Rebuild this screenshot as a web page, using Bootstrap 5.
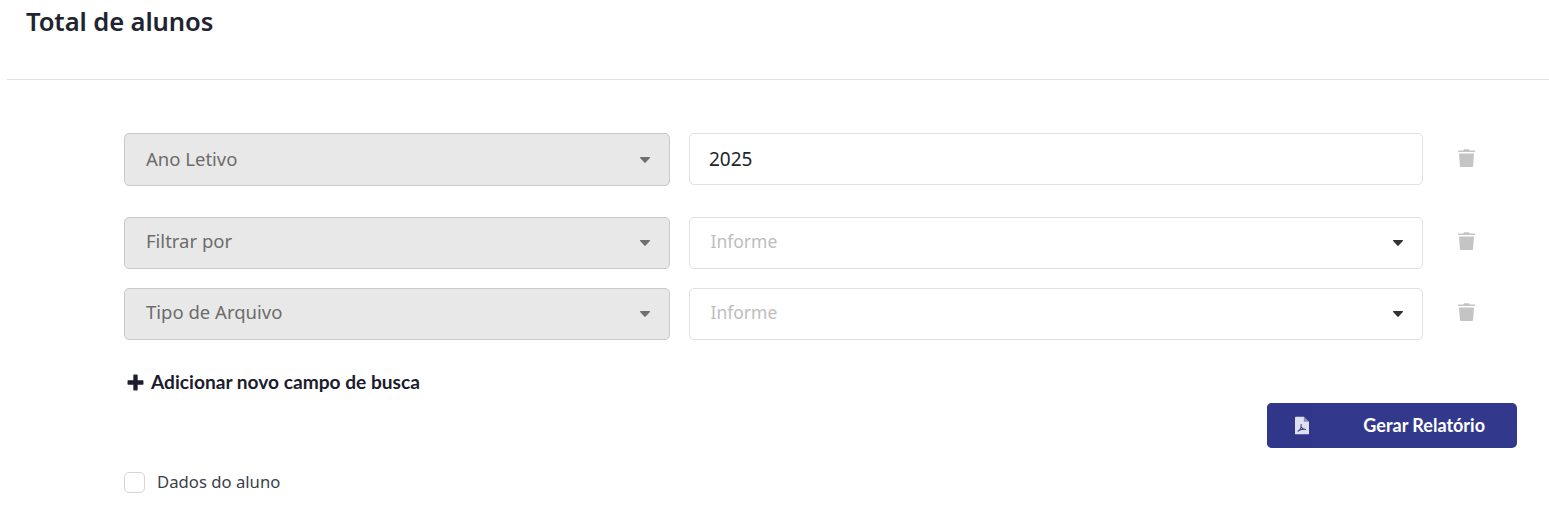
<!DOCTYPE html>
<html lang="pt-BR">
<head>
<meta charset="utf-8">
<title>Total de alunos</title>
<link href="https://cdn.jsdelivr.net/npm/bootstrap@5.3.0/dist/css/bootstrap.min.css" rel="stylesheet">
<style>
html,body{height:511px;overflow:hidden;background:#fff}
body{font-family:"Lato","Noto Sans",sans-serif;color:#212529}
.page-head{height:79px;padding:7px 0 0 26px}
.page-title{font-family:"Noto Sans",sans-serif;font-size:25.6px;font-weight:600;line-height:30px;color:#1f2430;margin:0;letter-spacing:-.1px}
.page-rule{height:1px;background:#e2e2e2;margin:0 0 0 7px;opacity:1;border:0}
.filters{padding:53px 32px 0 124px}
.filter-row{height:52px;gap:19px}
.filter-row.first{margin-bottom:32px}
.filter-row.mid{margin-bottom:19px}
.field-key,.field-val{height:52px;font-family:"Noto Sans",sans-serif;border-radius:5px;box-shadow:none}
.field-key{width:546px;flex:none;font-size:18.5px;background-color:#e8e8e8;border:1px solid #c9c9c9;color:#6c6c6c;padding:0 20px 5px 21px;
 background-image:url("data:image/svg+xml,%3Csvg xmlns='http://www.w3.org/2000/svg' viewBox='0 0 12 8'%3E%3Cpath d='M1.500 1h9a.6.6 0 0 1 .4 1L6.400 6.800a.6.6 0 0 1-.8 0L1.100 2a.6.6 0 0 1 .4-1z' fill='%236f6f6f'/%3E%3C/svg%3E");background-position:right 18px center;background-size:12px 8px}
.filter-row.first .field-key{height:53px;padding-bottom:2px}
.field-val{width:734px;flex:none;background-color:#fff;border:1px solid #e0e0e0;color:#212529;padding:0 19px;font-size:19px}
select.field-val{color:#bdbdbd;padding:0 19px 3px 20.5px;font-size:17.5px;
 background-image:url("data:image/svg+xml,%3Csvg xmlns='http://www.w3.org/2000/svg' viewBox='0 0 12 8'%3E%3Cpath d='M1.500 1h9a.6.6 0 0 1 .4 1L6.400 6.800a.6.6 0 0 1-.8 0L1.100 2a.6.6 0 0 1 .4-1z' fill='%23333'/%3E%3C/svg%3E");background-position:right 18px center;background-size:12px 8px}
.trash-btn{border:0;background:none;padding:0;margin-left:14px;width:20px;height:47px;display:flex;align-items:center;justify-content:center}
.filter-row.first .trash-btn{height:49px}
.add-link{font-weight:700;font-size:19.15px;color:#1c1c2e;text-decoration:none;margin-top:29px;line-height:26px;padding-left:2px;gap:6px}
.report-wrap{margin-top:8px}
.report-btn{width:250px;height:45px;background:#32398c;border:0;border-radius:5px;color:#fff;font-weight:700;font-size:18px;padding:0;overflow:hidden}
.report-icon{width:45px;height:45px;flex:none;background:#30378a;padding-right:3px}
.report-text{flex:1;padding-right:32px;text-align:right}
.data-check{margin-top:22px;gap:12px}
.data-check .form-check-input{width:21px;height:21px;margin:0;border:1px solid #d5d5d5;border-radius:5px}
.data-check label{font-family:"Noto Sans",sans-serif;font-size:16.7px;line-height:21px;margin-top:-1px;color:#3a3f4a}
</style>
</head>
<body>
<div class="page-head"><h1 class="page-title">Total de alunos</h1></div>
<hr class="page-rule">
<div class="filters">
  <div class="filter-row first d-flex align-items-start">
    <select class="form-select field-key" aria-label="Campo"><option>Ano Letivo</option></select>
    <input class="form-control field-val" value="2025" aria-label="Ano Letivo">
    <button class="trash-btn" type="button" aria-label="Remover"><svg width="17" height="19" viewBox="0 0 17 19"><path d="M6 1.200h5l.7 1.300h4.600a.7.7 0 0 1 .7.7v.9H0v-.9a.7.7 0 0 1 .7-.7h4.600zM1 5.500h15l-.9 12.300a1.300 1.300 0 0 1-1.300 1.200H3.200a1.300 1.300 0 0 1-1.300-1.200z" fill="#c4c4c4"/></svg></button>
  </div>
  <div class="filter-row mid d-flex align-items-start">
    <select class="form-select field-key" aria-label="Campo"><option>Filtrar por</option></select>
    <select class="form-select field-val" aria-label="Filtrar por"><option>Informe</option></select>
    <button class="trash-btn" type="button" aria-label="Remover"><svg width="17" height="19" viewBox="0 0 17 19"><path d="M6 1.200h5l.7 1.300h4.600a.7.7 0 0 1 .7.7v.9H0v-.9a.7.7 0 0 1 .7-.7h4.600zM1 5.500h15l-.9 12.300a1.300 1.300 0 0 1-1.300 1.200H3.200a1.300 1.300 0 0 1-1.300-1.200z" fill="#c4c4c4"/></svg></button>
  </div>
  <div class="filter-row d-flex align-items-start">
    <select class="form-select field-key" aria-label="Campo"><option>Tipo de Arquivo</option></select>
    <select class="form-select field-val" aria-label="Tipo de Arquivo"><option>Informe</option></select>
    <button class="trash-btn" type="button" aria-label="Remover"><svg width="17" height="19" viewBox="0 0 17 19"><path d="M6 1.200h5l.7 1.300h4.600a.7.7 0 0 1 .7.7v.9H0v-.9a.7.7 0 0 1 .7-.7h4.600zM1 5.500h15l-.9 12.300a1.300 1.300 0 0 1-1.300 1.200H3.200a1.300 1.300 0 0 1-1.300-1.200z" fill="#c4c4c4"/></svg></button>
  </div>
  <a href="#" class="add-link d-flex align-items-center">
    <svg width="19" height="19" viewBox="0 0 16 16"><path d="M6.700 1.800h2.600v4.900h4.900v2.600H9.300v4.900H6.700V9.300H1.800V6.700h4.900z" fill="#1c1c2e" stroke="#1c1c2e" stroke-linejoin="round"/></svg>
    <span>Adicionar novo campo de busca</span>
  </a>
  <div class="report-wrap d-flex justify-content-end">
    <button class="btn report-btn d-flex align-items-center" type="button">
      <span class="report-icon d-flex justify-content-end align-items-center"><svg width="14" height="19" viewBox="0 0 15 19"><path d="M1 0h8.500L15 5.500V18a1 1 0 0 1-1 1H1a1 1 0 0 1-1-1V1a1 1 0 0 1 1-1z" fill="#dfe0ee"/><path d="M9.500 0v5.500H15z" fill="#32398c" opacity=".5"/><path d="M6.500 8c.6 3-1.500 6.500-3.500 8M6.800 11.500c1.200 1.400 3 2.300 5 2.300M3 15.500c2-1.500 5-2.300 8-2" fill="none" stroke="#32398c" stroke-width="1.100"/></svg></span>
      <span class="report-text">Gerar Relatório</span>
    </button>
  </div>
  <div class="data-check form-check d-flex align-items-center p-0">
    <input class="form-check-input" type="checkbox" id="dados">
    <label for="dados">Dados do aluno</label>
  </div>
</div>
</body>
</html>
